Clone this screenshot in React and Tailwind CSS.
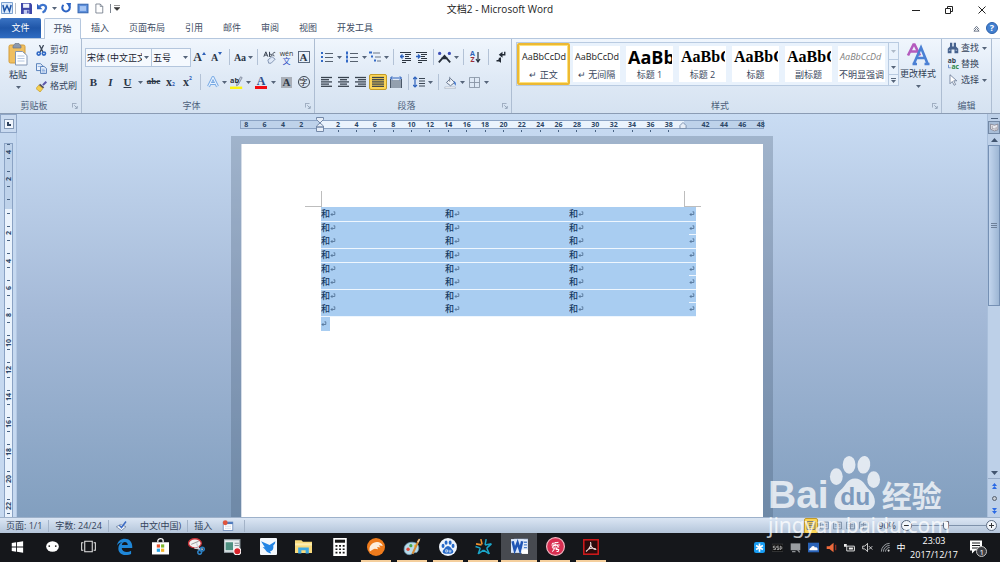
import React from "react";

const UI = "font-['Open_Sans','Noto_Sans_CJK_SC',sans-serif]";

function Svg({ className, box = "0 0 16 16", children }) {
  return (
    <svg viewBox={box} className={"shrink-0 " + className} fill="none" aria-hidden="true">
      {children}
    </svg>
  );
}

function Caret({ className = "w-[9px]" }) {
  return (
    <span className={"flex shrink-0 justify-center " + className}>
      <Svg box="0 0 5 3" className="h-[3px] w-[5px]">
        <path d="M0 0h5L2.500 3z" fill="#56657a" />
      </Svg>
    </span>
  );
}

function Sep({ className = "w-[8px]" }) {
  return (
    <span className={"flex shrink-0 justify-center " + className}>
      <span className="h-[16px] w-px bg-[#b3c2d6]" />
    </span>
  );
}

function Slot({ label, className = "w-[17px]", active, children }) {
  return (
    <button
      type="button"
      aria-label={label}
      className={
        "flex h-[16px] shrink-0 items-center justify-center " +
        (active ? "rounded-[2px] border border-[#c29b29] bg-[#fbd558] " : "") +
        className
      }
    >
      {children}
    </button>
  );
}

function Launcher() {
  return (
    <Svg box="0 0 8 8" className="h-[6px] w-[6px]">
      <path d="M.5 6V.5H6M3 3l3.500 3.500M7 4v3.200H3.800" stroke="#8393a8" />
    </Svg>
  );
}

function Group({ title, className, launcher = true, children }) {
  return (
    <section aria-label={title} className={"flex shrink-0 flex-col border-r border-[#adbdd2] " + className}>
      <div className="flex-1">{children}</div>
      <div className="flex h-[15px] items-center">
        <span className={"flex-1 text-center text-[9px] text-[#4c5f7a] " + (launcher ? "pr-[4px]" : "")}>{title}</span>
        {launcher ? (
          <span className="pr-[3px]">
            <Launcher />
          </span>
        ) : null}
      </div>
    </section>
  );
}

function Lines({ rows }) {
  return (
    <Svg box="0 0 12 12" className="h-[12px] w-[12px]">
      {rows.map(([x, w], i) => (
        <path key={i} d={`M${x} ${1.5 + i * 2.2}h${w}`} stroke="#39434f" strokeWidth="1.300" />
      ))}
    </Svg>
  );
}

function TitleBar() {
  return (
    <header className="grid h-[18px] shrink-0 grid-cols-[1fr_auto_1fr] bg-white">
      <div className="flex items-center pb-[2px]">
        <Svg className="ml-px h-[12px] w-[12px]">
          <rect x=".5" y=".5" width="15" height="15" rx="1" fill="#dceafa" stroke="#3f74b8" />
          <path d="M2.500 4l2 8L8 5l3.300 7 2.200-8" stroke="#1f55a8" strokeWidth="2" />
        </Svg>
        <span className="ml-[2px] h-[11px] w-px bg-[#b9bec5]" />
        <Slot label="保存" className="ml-[2px] w-[17px]">
          <Svg className="h-[11px] w-[11px]">
            <path d="M0 0h14l2 2v14H0z" fill="#3d46a8" />
            <path d="M3 1h9v6H3z" fill="#eef2fc" />
            <path d="M4 10h8v6H4z" fill="#c5cdf0" />
            <path d="M9 11h2v4H9z" fill="#3d46a8" />
          </Svg>
        </Slot>
        <Slot label="撤消" className="w-[14px]">
          <Svg className="h-[11px] w-[11px]">
            <path d="M0 1v8h8z" fill="#2e62bd" />
            <path d="M3 6c4-6 11-3 10 2-.5 3-3 5-5 6" stroke="#3d74cd" strokeWidth="3.200" />
          </Svg>
        </Slot>
        <Caret className="w-[10px]" />
        <Slot label="恢复" className="w-[14px]">
          <Svg className="h-[10px] w-[10px]">
            <path d="M4 3a6 6 0 1 0 8 0" stroke="#2d64c4" strokeWidth="3.200" />
            <path d="M8 0h8l-1 8z" fill="#2d64c4" />
          </Svg>
        </Slot>
        <Slot label="全屏" className="ml-[2px] w-[16px]">
          <Svg className="h-[11px] w-[12px]">
            <rect x=".8" y="1.800" width="14.400" height="12.400" fill="#5f90dc" stroke="#3465b0" strokeWidth="1.500" />
            <path d="M3.500 4.500h9v7h-9z" fill="#a6c5f4" />
          </Svg>
        </Slot>
        <Slot label="新建" className="w-[16px]">
          <Svg className="h-[11px] w-[10px]">
            <path d="M3 .8h7l4 4v10.400H3z" fill="#fff" stroke="#616c7c" strokeWidth="1.200" />
            <path d="M10 .8v4h4" stroke="#616c7c" />
          </Svg>
        </Slot>
        <span className="ml-[3px] h-[9px] w-px bg-[#7d8590]" />
        <Svg box="0 0 6 6" className="ml-[3px] h-[6px] w-[6px]">
          <path d="M0 .5h6M0 2.500h6L3 5.500z" fill="#333" stroke="#333" strokeWidth=".5" />
        </Svg>
      </div>
      <h1 className="self-center text-[10px] leading-[18px] text-[#1c1c1c]">文档2 - Microsoft Word</h1>
      <div className="flex items-center justify-end pr-[2px] pt-[2px]">
        <Slot label="最小化" className="w-[33px]">
          <span className="h-px w-[8px] bg-[#222]" />
        </Slot>
        <Slot label="向下还原" className="w-[33px]">
          <Svg box="0 0 8 8" className="h-[8px] w-[8px]">
            <path d="M.5 2.500h5v5h-5zM2.500 2.500v-2h5v5h-2" stroke="#222" />
          </Svg>
        </Slot>
        <Slot label="关闭" className="w-[33px]">
          <Svg box="0 0 8 8" className="h-[8px] w-[8px]">
            <path d="M.5.5l7 7M7.500.5l-7 7" stroke="#222" />
          </Svg>
        </Slot>
      </div>
    </header>
  );
}

const TABS = ["插入", "页面布局", "引用", "邮件", "审阅", "视图", "开发工具"];

function TabBar() {
  return (
    <nav className="flex h-[20px] shrink-0 items-stretch bg-white text-[9px] text-[#3c4b63]">
      <button type="button" className="w-[41px] rounded-t-[2px] bg-gradient-to-b from-[#3b74c4] via-[#1f56a8] to-[#2f6cc2] text-white">
        文件
      </button>
      <button type="button" className="relative z-10 -mb-px ml-[3px] w-[37px] rounded-t-[2px] border border-b-0 border-[#b5c7de] bg-[#f4f9fe]">
        开始
      </button>
      {TABS.map((t) => (
        <button type="button" key={t} className="px-[10px]">
          {t}
        </button>
      ))}
      <div className="ml-auto flex items-center gap-[6px] pr-[2px]">
        <button type="button" aria-label="功能区最小化">
          <Svg box="0 0 8 8" className="h-[7px] w-[7px]">
            <path d="M1 5l3-3.500L7 5M1 7l3-3 3 3z" stroke="#59667a" />
          </Svg>
        </button>
        <button type="button" aria-label="帮助" className="flex h-[12px] w-[12px] items-center justify-center rounded-full border border-[#2d61ab] bg-[#4380d0] text-[9px] font-bold leading-[10px] text-white">
          ?
        </button>
      </div>
    </nav>
  );
}

function ClipboardGroup() {
  return (
    <Group title="剪贴板" className="w-[82px]">
      <div className="flex pt-[2px]">
        <button type="button" className="flex w-[36px] flex-col items-center text-[9px] leading-[14px] text-[#2f3e55]">
          <Svg box="0 0 20 24" className="mt-px h-[24px] w-[20px]">
            <rect x="1" y="3" width="16" height="18" rx="1.500" fill="#f0bf60" stroke="#d39c3b" />
            <path d="M5 4c0-1 2-1 2-2.500h4C11 3 13 3 13 4v2H5z" fill="#8b99ae" stroke="#6b7789" strokeWidth=".7" />
            <path d="M7.500 9.500h7l4.500 4v9.500H7.500z" fill="#fdfeff" stroke="#8396b3" />
            <path d="M9.500 14h7M9.500 16.500h7M9.500 19h7" stroke="#b4c6e0" />
          </Svg>
          <span className="mt-[2px]">粘贴</span>
          <span className="flex h-[10px] items-center">
            <Caret />
          </span>
        </button>
        <div className="flex flex-col text-[9px] text-[#34435a]">
          <button type="button" className="flex h-[18px] items-center gap-[3px]">
            <Svg className="h-[11px] w-[11px]">
              <path d="M5 0l5 10M11 0L6 10" stroke="#3a4556" strokeWidth="1.800" />
              <circle cx="4" cy="12.500" r="2.300" stroke="#2f68c4" strokeWidth="2.400" />
              <circle cx="11.500" cy="12.500" r="2.300" stroke="#2f68c4" strokeWidth="2.400" />
            </Svg>
            剪切
          </button>
          <button type="button" className="flex h-[18px] items-center gap-[3px]">
            <Svg className="h-[11px] w-[11px]">
              <path d="M.7 1h6l3 3v7h-9z" fill="#e8f1fd" stroke="#3e6cae" strokeWidth="1.200" />
              <path d="M6.700 5h5l3.500 3v7.200H6.700z" fill="#e8f1fd" stroke="#3e6cae" strokeWidth="1.200" />
              <path d="M8.500 9h4M8.500 11h5M8.500 13h5M2.500 5h4" stroke="#6b95d4" />
            </Svg>
            复制
          </button>
          <button type="button" className="flex h-[18px] items-center gap-[3px]">
            <Svg className="h-[11px] w-[11px]">
              <path d="M15 1l-5 5" stroke="#5b56a8" strokeWidth="3" />
              <path d="M6 4l6 5-2 2-6-5z" fill="#55515f" />
              <path d="M4 6l6 5-4 5-6-5z" fill="#f4cf4d" stroke="#c69a2a" />
            </Svg>
            格式刷
          </button>
        </div>
      </div>
    </Group>
  );
}

function Combo({ label, value, className }) {
  return (
    <div className={"flex h-[19px] items-center border border-[#b4c6dd] bg-[#f5f9fe] " + className}>
      <input
        aria-label={label}
        defaultValue={value}
        className="h-full min-w-0 flex-1 bg-transparent pl-px text-[9px] text-[#1b2533] outline-none"
      />
      <Caret />
    </div>
  );
}

function FontGroup() {
  const serif = "font-['Liberation_Serif',serif] text-[#2b3646]";
  return (
    <Group title="字体" className="w-[233px]">
      <div className="flex flex-col gap-[5px] pl-[3px] pt-[8px]">
        <div className="flex h-[20px] items-center">
          <Combo label="字体" value="宋体 (中文正文)" className="w-[67px]" />
          <Combo label="字号" value="五号" className="w-[39px] border-l-0" />
          <Slot label="增大字体">
            <span className={serif + " text-[12px] font-bold"}>A</span>
            <Svg box="0 0 4 3" className="mb-[8px] h-[3px] w-[4px]">
              <path d="M0 3h4L2 0z" fill="#2d60b8" />
            </Svg>
          </Slot>
          <Slot label="缩小字体">
            <span className={serif + " pt-px text-[10px] font-bold"}>A</span>
            <Svg box="0 0 4 3" className="mb-[8px] h-[3px] w-[4px]">
              <path d="M0 0h4L2 3z" fill="#2d60b8" />
            </Svg>
          </Slot>
          <Sep />
          <Slot label="更改大小写" className="w-[14px]">
            <span className={serif + " text-[10px] font-bold"}>Aa</span>
          </Slot>
          <Caret className="w-[6px]" />
          <Sep />
          <Slot label="清除格式">
            <Svg className="h-[13px] w-[13px]">
              <path d="M1 7l2.500-6L6 7M2 5h3M8 1v6M8 4.500c4-2 4 3 0 2M15 2c-3-1.500-4 4-1 4" stroke="#36414f" strokeWidth="1.200" />
              <path d="M6 11l5-4 4 3-5 5H7z" fill="#dfe9f8" stroke="#7286a6" />
            </Svg>
          </Slot>
          <Slot label="拼音指南">
            <span className="flex flex-col items-center text-[8px] leading-[8px] text-[#2e50c4]">
              <span className="text-[7px] leading-[7px] text-[#333]">wén</span>文
            </span>
          </Slot>
          <Slot label="字符边框">
            <span className={serif + " flex h-[12px] w-[12px] items-center justify-center border border-[#5a6a7f] text-[11px] font-bold"}>A</span>
          </Slot>
        </div>
        <div className="flex h-[20px] items-center">
          <Slot label="加粗">
            <span className={serif + " text-[11px] font-bold"}>B</span>
          </Slot>
          <Slot label="倾斜">
            <span className={serif + " text-[11px] font-bold italic"}>I</span>
          </Slot>
          <Slot label="下划线">
            <span className={serif + " text-[11px] font-bold underline"}>U</span>
          </Slot>
          <Caret />
          <Slot label="删除线">
            <span className={serif + " text-[9px] font-bold line-through"}>abe</span>
          </Slot>
          <Slot label="下标">
            <span className={serif + " text-[12px] font-bold"}>x</span>
            <span className="mt-[6px] text-[5px] font-bold text-[#2d60b8]">2</span>
          </Slot>
          <Slot label="上标">
            <span className={serif + " text-[12px] font-bold"}>x</span>
            <span className="mb-[6px] text-[5px] font-bold text-[#2d60b8]">2</span>
          </Slot>
          <Sep className="w-[9px]" />
          <Slot label="文本效果" className="w-[15px]">
            <Svg className="h-[12px] w-[12px]">
              <path d="M2 14L8 2l6 12M5 10h6" stroke="#78aae4" strokeWidth="4" />
              <path d="M2 14L8 2l6 12M5 10h6" stroke="#e9f3ff" strokeWidth="1.500" />
            </Svg>
          </Slot>
          <Caret className="w-[8px]" />
          <Slot label="突出显示" className="w-[16px]">
            <Svg className="h-[13px] w-[13px]">
              <path d="M0 13h15v3H0z" fill="#fcf410" />
              <path d="M15 2l-5 9-2 1 .5-3L13 1z" fill="#c8cfdb" stroke="#67738a" strokeWidth=".8" />
              <text x="0" y="9" fontSize="9" fontWeight="700" fill="#2d3541">ab</text>
            </Svg>
          </Slot>
          <Caret />
          <Slot label="字体颜色" className="w-[16px]">
            <span className="flex flex-col items-center">
              <span className="font-['Liberation_Serif',serif] text-[12px] font-bold leading-[10px] text-[#2f4f8c]">A</span>
              <span className="h-[3px] w-[12px] bg-[#f20d12]" />
            </span>
          </Slot>
          <Caret />
          <Slot label="字符底纹">
            <span className={serif + " flex h-[11px] w-[11px] items-center justify-center bg-[#a9afb8] text-[11px] font-bold"}>A</span>
          </Slot>
          <Slot label="带圈字符">
            <span className="flex h-[12px] w-[12px] items-center justify-center rounded-full border border-[#3a4552] text-[8px] leading-[10px] text-[#222]">字</span>
          </Slot>
        </div>
      </div>
    </Group>
  );
}

function ListIcon({ kind }) {
  return (
    <Svg box="0 0 12 12" className="h-[12px] w-[12px]">
      {kind === "multi" ? (
        <>
          <path d="M0 1.500h3M2 5.500h2M5 9.500h2" stroke="#3269c6" strokeWidth="1.800" />
          <path d="M4 2h7M6 6h6M8 10h4" stroke="#6b7787" />
        </>
      ) : (
        <>
          <path d="M0 2h2M0 6h2M0 10h2" stroke="#3269c6" strokeWidth={kind === "bullet" ? 2 : 3} />
          <path d="M4 2.500h8M4 6.500h8M4 10.500h8" stroke="#56616f" />
        </>
      )}
    </Svg>
  );
}

function IndentIcon({ out }) {
  return (
    <Svg box="0 0 12 12" className="h-[12px] w-[12px]">
      <path d="M0 1.500h11M5 3.500h6M5 5.500h4M5 7.500h6M2 9.500h9M2 11.500h4" stroke="#2d3641" />
      <path d={out ? "M0 5.500h4M2.500 3.500l-2 2 2 2" : "M0 5.500h4M2 3.500l2 2-2 2"} stroke="#2d62bd" strokeWidth="1.300" />
    </Svg>
  );
}

function ParagraphGroup() {
  return (
    <Group title="段落" className="w-[197px]">
      <div className="flex flex-col gap-[5px] pl-[3px] pt-[8px]">
        <div className="flex h-[20px] items-center">
          <Slot label="项目符号"><ListIcon kind="bullet" /></Slot>
          <Caret className="w-[8px]" />
          <Slot label="编号"><ListIcon kind="number" /></Slot>
          <Caret className="w-[8px]" />
          <Slot label="多级列表" className="w-[14px]"><ListIcon kind="multi" /></Slot>
          <Caret className="w-[8px]" />
          <Sep className="w-[7px]" />
          <Slot label="减少缩进量"><IndentIcon out /></Slot>
          <Slot label="增加缩进量" className="w-[15px]"><IndentIcon /></Slot>
          <Sep className="w-[8px]" />
          <Slot label="中文版式" className="w-[15px]">
            <Svg className="h-[13px] w-[13px]">
              <path d="M1 14l7-8 7 8M4 9h8" stroke="#262e39" strokeWidth="2.200" />
              <circle cx="2" cy="3" r="2" fill="#3e4fb8" />
              <circle cx="14" cy="3" r="2" fill="#3e4fb8" />
            </Svg>
          </Slot>
          <Caret className="w-[8px]" />
          <Sep className="w-[7px]" />
          <Slot label="排序">
            <span className="flex flex-col text-[7px] font-bold leading-[6px] text-[#2f62b8]">
              A<span className="text-[#9c2f3c]">Z</span>
            </span>
            <Svg box="0 0 6 12" className="h-[12px] w-[6px]">
              <path d="M3 1v9M1 8l2 3 2-3" stroke="#2b3440" strokeWidth="1.200" />
            </Svg>
          </Slot>
          <Sep className="w-[8px]" />
          <Slot label="显示编辑标记">
            <Svg className="h-[12px] w-[12px]">
              <path d="M13 1v4H8M6 9v4H2" stroke="#222a35" strokeWidth="1.800" />
              <path d="M10 1v8L5 5zM8 8v8l-4-4z" fill="#222a35" />
            </Svg>
          </Slot>
        </div>
        <div className="flex h-[20px] items-center">
          <Slot label="左对齐"><Lines rows={[[0, 11], [0, 8], [0, 11], [0, 8], [0, 11]]} /></Slot>
          <Slot label="居中"><Lines rows={[[0, 11], [2, 7], [0, 11], [2, 7], [0, 11]]} /></Slot>
          <Slot label="右对齐"><Lines rows={[[0, 11], [3, 8], [0, 11], [3, 8], [0, 11]]} /></Slot>
          <Slot label="两端对齐" active className="w-[18px]"><Lines rows={[[0, 12], [0, 12], [0, 12], [0, 12], [0, 12]]} /></Slot>
          <Slot label="分散对齐">
            <Svg box="0 0 12 12" className="h-[12px] w-[12px]">
              <path d="M0 5h12M0 7h12M0 9h12M0 11h12M.5 3v9M11.500 3v9" stroke="#4b5868" />
              <path d="M.5 2h11M2.500.2L.5 2l2 1.800M9.500.2l2 1.800-2 1.800" stroke="#2d62bd" />
            </Svg>
          </Slot>
          <Sep className="w-[8px]" />
          <Slot label="行距" className="w-[14px]">
            <Svg box="0 0 12 12" className="h-[12px] w-[12px]">
              <path d="M2 1v10M0 3l2-2 2 2M0 9l2 2 2-2" stroke="#2d62bd" strokeWidth="1.200" />
              <path d="M6 2.500h6M6 5h6M6 7.500h6M6 10h6" stroke="#3b4755" />
            </Svg>
          </Slot>
          <Caret className="w-[8px]" />
          <Sep className="w-[8px]" />
          <Slot label="底纹">
            <Svg className="h-[13px] w-[13px]">
              <path d="M3 8l5-5 5 5-5 4z" fill="#f0f4fa" stroke="#65748b" strokeWidth="1.200" />
              <path d="M7 1v6" stroke="#65748b" />
              <path d="M12 6c3 1 3 4 2 6l-2-4z" fill="#3a6fc8" />
              <path d="M1 13.500h13v2H1z" fill="#fff" stroke="#9aa7b8" strokeWidth=".7" />
            </Svg>
          </Slot>
          <Caret className="w-[7px]" />
          <Slot label="框线">
            <Svg box="0 0 12 12" className="h-[11px] w-[11px]">
              <path d="M.5.5h11v11H.5zM6 .5v11M.5 6h11" stroke="#8995a5" />
            </Svg>
          </Slot>
          <Caret className="w-[7px]" />
        </div>
      </div>
    </Group>
  );
}

const CAMBRIA = "font-['Liberation_Serif',serif] text-[16px] font-bold text-black";
const STYLES = [
  { name: "↵ 正文", text: "AaBbCcDd", cls: "text-[9px] text-[#222]", on: true },
  { name: "↵ 无间隔", text: "AaBbCcDd", cls: "text-[9px] text-[#222]" },
  { name: "标题 1", text: "AaBb", cls: "text-[18px] font-bold text-black" },
  { name: "标题 2", text: "AaBbC", cls: CAMBRIA },
  { name: "标题", text: "AaBbC", cls: CAMBRIA },
  { name: "副标题", text: "AaBbC", cls: CAMBRIA },
  { name: "不明显强调", text: "AaBbCcDd", cls: "text-[9px] italic text-[#808080]" },
];

function StylesGroup() {
  return (
    <Group title="样式" className="w-[430px]">
      <div className="flex pl-[4px] pt-[3px]">
        <div className="flex h-[44px] border border-[#b9cbe1] bg-[#e9f2fc]">
          {STYLES.map((s) => (
            <button
              type="button"
              key={s.name}
              className={
                "flex w-[53px] rounded-[2px] " +
                (s.on ? "border-2 border-[#edb933] bg-[#fde27c] p-px" : "p-[3px]")
              }
            >
              <span className="flex h-full min-w-0 flex-1 flex-col overflow-hidden bg-white px-px">
                <span className={"flex h-[23px] items-center overflow-hidden whitespace-nowrap pl-px " + s.cls}>{s.text}</span>
                <span className="whitespace-nowrap text-center text-[9px] leading-[14px] text-[#38465c]">{s.name}</span>
              </span>
            </button>
          ))}
          <div className="flex w-[10px] flex-col border-l border-[#b9cbe1]">
            <Slot label="上一行" className="w-full opacity-40"><Caret /></Slot>
            <Slot label="下一行" className="w-full border-y border-[#b9cbe1]"><Caret /></Slot>
            <button type="button" aria-label="其他样式" className="flex flex-1 flex-col items-center justify-center gap-px">
              <span className="h-px w-[5px] bg-[#56657a]" />
              <Caret />
            </button>
          </div>
        </div>
        <button type="button" className="flex w-[38px] flex-col items-center whitespace-nowrap text-[9px] leading-[14px] text-[#2f3e55]">
          <Svg box="0 0 24 24" className="h-[25px] w-[24px]">
            <path d="M2 13L7.500 2h1L14 13M4.500 9h8" stroke="#b45bbd" strokeWidth="2.600" />
            <path d="M8 21L15 5l6.500 16M11 15.500h9M6.500 21.500h4.500M18.500 21.500h5" stroke="#4b80d4" strokeWidth="2.600" />
          </Svg>
          <span>更改样式</span>
          <span className="flex h-[10px] items-center"><Caret /></span>
        </button>
      </div>
    </Group>
  );
}

function EditGroup() {
  return (
    <Group title="编辑" className="w-[50px]" launcher={false}>
      <div className="flex flex-col pl-[5px] pt-px text-[9px] text-[#34435a]">
        <button type="button" className="flex h-[16px] items-center">
          <Svg className="mr-[2px] h-[12px] w-[12px]">
            <path d="M4 1h3v5h2V1h3v5l3 3v6h-5v-5H6v5H1V9l3-3z" fill="#46628e" />
            <path d="M2.500 11h2M11.500 11h2" stroke="#d5e2f4" />
          </Svg>
          查找
          <Caret className="w-[11px]" />
        </button>
        <button type="button" className="flex h-[16px] items-center">
          <Svg className="mr-[2px] h-[12px] w-[12px]">
            <text x="1" y="7" fontSize="9" fontWeight="700" fill="#323d4d">ab</text>
            <text x="6" y="15" fontSize="9" fontWeight="700" fill="#2b8a48">ac</text>
            <path d="M2 9v4h3" stroke="#4c78c0" />
          </Svg>
          替换
        </button>
        <button type="button" className="flex h-[16px] items-center">
          <Svg className="mr-[2px] h-[12px] w-[12px]">
            <path d="M4 1v12l3-3 2.500 5 2-1L9 9h4z" fill="#fff" stroke="#5d6f8c" />
          </Svg>
          选择
          <Caret className="w-[11px]" />
        </button>
      </div>
    </Group>
  );
}

function Ribbon() {
  return (
    <div className="flex h-[76px] shrink-0 border-y border-t-[#b5c7de] border-b-[#8b9cb4] bg-gradient-to-b from-[#f0f6fd] via-[#e0eaf6] to-[#d5e2f1]">
      <ClipboardGroup />
      <FontGroup />
      <ParagraphGroup />
      <StylesGroup />
      <EditGroup />
    </div>
  );
}

const H_MARKS = Array.from({ length: 29 }, (_, i) => (i - 4) * 2);

function HorizontalRuler() {
  return (
    <div className="relative mt-[6px] h-[12px] w-[524px] self-center text-[7px] font-bold leading-[7px] text-[#2c4666]">
      <div className="h-[9px] border border-[#8ba3c4] bg-[linear-gradient(to_right,#bed2ea_79px,#eaf3fd_79px,#eaf3fd_443px,#bed2ea_443px)]" />
      <ol className="absolute left-[-3px] right-[-6px] top-px flex">
        {H_MARKS.map((n) => (
          <li key={n} className="flex flex-1 flex-col items-center">
            {n === 0 || n === 40 ? "" : Math.abs(n)}
            {n > 0 && n < 40 ? <span className="mt-[2px] h-[2px] w-px bg-[#4a6484]" /> : null}
          </li>
        ))}
      </ol>
      <Svg box="0 0 8 15" className="absolute left-[76px] top-[-3px] h-[15px] w-[8px]">
        <path d="M.5.5h7v2L4 6 .5 2.500zM4 6l3.500 3v1h-7V9zM.5 10h7v4.500h-7z" fill="#e6edf7" stroke="#7489a8" />
      </Svg>
      <Svg box="0 0 8 8" className="absolute left-[439px] top-[2px] h-[7px] w-[8px]">
        <path d="M4 .5L7.500 4v3.500h-7V4z" fill="#e6edf7" stroke="#7489a8" />
      </Svg>
    </div>
  );
}

const V_MARKS = ["4", "2", "", "2", "4", "6", "8", "10", "12", "14", "16", "18", "20", "22"];

function VerticalRuler() {
  return (
    <div className="flex w-[17px] shrink-0 flex-col border-r border-[#b4c9e4] bg-[#c6d9f0]">
      <button type="button" aria-label="制表符" className="flex h-[19px] w-[17px] shrink-0 items-center justify-center border border-[#8fa6c6] bg-[#c9daf0]">
        <span className="flex h-[10px] w-[10px] items-center justify-center border border-[#8499b5] bg-[#f0f5fc]">
          <span className="h-[4px] w-[4px] border-b-2 border-l-2 border-[#2f435f]" />
        </span>
      </button>
      <div className="ml-[4px] mt-[10px] flex min-h-0 w-[9px] flex-1 flex-col overflow-hidden border border-b-0 border-[#8ba3c4] bg-[linear-gradient(to_bottom,#bed2ea_65px,#eaf3fd_65px)]">
        <ol className="-mt-[6px] flex h-[382px] shrink-0 flex-col text-[7px] font-bold leading-[7px] text-[#2c4666]">
          {V_MARKS.map((n, i) => (
            <li key={i} className="flex flex-1 flex-col items-center justify-between py-[6px]">
              <span className="h-px w-[3px] bg-[#4a6484]" />
              <span className="rotate-180 [writing-mode:vertical-rl]">{n}</span>
              <span className="h-px w-[3px] bg-[#4a6484]" />
            </li>
          ))}
        </ol>
      </div>
    </div>
  );
}

function Mark() {
  return (
    <Svg box="0 0 6 6" className="inline-block h-[6px] w-[6px]">
      <path d="M3.500.8h1.300v2.700H1M2.500 2L1 3.500 2.500 5" stroke="#4d6c90" strokeWidth=".8" />
    </Svg>
  );
}

const ROWS = [
  { h: "h-[14px]", line: true },
  { h: "h-[13px]", line: false },
  { h: "h-[14px]", line: true },
  { h: "h-[14px]", line: true },
  { h: "h-[13px]", line: false },
  { h: "h-[14px]", line: true },
  { h: "h-[13px]", line: false },
  { h: "h-[14px]", line: true },
];

function DocumentPage() {
  return (
    <div className="mt-[4px] flex min-h-0 w-[542px] flex-1 flex-col self-center bg-[#33475f]/25 px-[10px] pt-[8px]">
      <main className="relative min-h-0 flex-1 overflow-hidden border-l border-[#d5dde8] bg-white pl-[79px] pt-[63px]">
        <span className="absolute left-[63px] top-[47px] h-[16px] w-[17px] border-b border-r border-[#bdbdbd]" />
        <span className="absolute left-[442px] top-[47px] h-[16px] w-[17px] border-b border-l border-[#bdbdbd]" />
        <table className="w-[375px] table-fixed border-collapse text-[9px] font-medium leading-[12px] text-[#173a63]">
          <colgroup>
            <col className="w-[124px]" />
            <col className="w-[124px]" />
            <col className="w-[120px]" />
            <col className="w-[7px]" />
          </colgroup>
          <tbody>
            {ROWS.map((r, i) => (
              <tr key={i} className={"bg-[#a9cdf1] " + r.h}>
                {[0, 1, 2].map((c) => (
                  <td
                    key={c}
                    className={
                      "overflow-hidden whitespace-nowrap p-0 font-['Noto_Sans_CJK_SC',sans-serif] " +
                      (r.line ? "border-b border-[#eef6fe]" : "")
                    }
                  >
                    <span className="flex items-center">和<Mark /></span>
                  </td>
                ))}
                <td className="border-b border-[#eef6fe] p-0">
                  <span className="flex items-center"><Mark /></span>
                </td>
              </tr>
            ))}
          </tbody>
        </table>
        <p className="flex h-[14px] w-[9px] items-center bg-[#a9cdf1]"><Mark /></p>
      </main>
    </div>
  );
}

function ScrollBar() {
  return (
    <div className="flex w-[13px] shrink-0 flex-col items-center border-l border-[#a9bfdb] bg-[#bdd0e8]">
      <span className="mt-[4px] h-px w-[7px] bg-[#4d617e]" />
      <button type="button" aria-label="标尺" className="mt-[2px] flex h-[13px] w-full shrink-0 items-center justify-center border border-[#7288a5] bg-[#a8bdd7]">
        <Svg className="h-[9px] w-[9px]">
          <path d="M1 2l7 2 6-2v10l-6 2-7-3z" fill="#e9eaf0" stroke="#77727c" strokeWidth="1.200" />
          <path d="M4 5v5l7 1V7" stroke="#77727c" />
        </Svg>
      </button>
      <button type="button" aria-label="向上滚动" className="flex h-[11px] w-full items-center justify-center">
        <Svg box="0 0 7 4" className="h-[4px] w-[7px]"><path d="M0 4h7L3.500 0z" fill="#41546f" /></Svg>
      </button>
      <div className="flex min-h-0 w-full flex-1 flex-col">
        <div className="flex h-1/2 flex-col items-center justify-center gap-px border border-[#7590b4] bg-gradient-to-r from-[#c2d5ed] to-[#9db6d4]">
          <span className="h-px w-[6px] bg-[#6d8099]" />
          <span className="h-px w-[6px] bg-[#6d8099]" />
          <span className="h-px w-[6px] bg-[#6d8099]" />
        </div>
      </div>
      <button type="button" aria-label="向下滚动" className="flex h-[12px] w-full shrink-0 items-center justify-center border-b border-[#96abc8]">
        <Svg box="0 0 7 4" className="h-[4px] w-[7px]"><path d="M0 0h7L3.500 4z" fill="#41546f" /></Svg>
      </button>
      <button type="button" aria-label="上一页" className="flex h-[13px] items-center">
        <Svg box="0 0 5 6" className="h-[6px] w-[5px]"><path d="M0 3h5L2.500 0zM0 6h5L2.500 3z" fill="#2b6ae6" /></Svg>
      </button>
      <button type="button" aria-label="选择浏览对象" className="flex h-[12px] items-center">
        <span className="h-[5px] w-[5px] rounded-full border border-[#56606e] bg-[#c6ccd4]" />
      </button>
      <button type="button" aria-label="下一页" className="flex h-[13px] items-center">
        <Svg box="0 0 5 6" className="h-[6px] w-[5px]"><path d="M0 0h5L2.500 3zM0 3h5L2.500 6z" fill="#2b6ae6" /></Svg>
      </button>
    </div>
  );
}

function StatusBar() {
  const sep = "h-[12px] w-px bg-[#a3b3c8]";
  return (
    <footer className="flex h-[16px] shrink-0 items-center border-t border-[#9db1ca] bg-gradient-to-b from-[#dbe6f4] to-[#b4c5da] text-[9px] text-[#34435a]">
      <div className="flex items-center gap-[6px] whitespace-nowrap pl-[6px]">
        <span>页面: 1/1</span>
        <span className={sep} />
        <span>字数: 24/24</span>
        <span className={sep} />
        <Svg className="h-[12px] w-[13px]">
          <path d="M1 9l6-3 7 3-6 5z" fill="#f4f7fc" stroke="#6a7c98" />
          <path d="M5 7l3 3 6-8" stroke="#3c6bc4" strokeWidth="2" />
        </Svg>
        <span className="ml-[6px]">中文(中国)</span>
        <span className={sep} />
        <span>插入</span>
        <Svg className="mx-[4px] h-[11px] w-[12px]">
          <rect x="1" y="3" width="14" height="12" fill="#fff" stroke="#577ab0" />
          <path d="M1 3h14v3H1z" fill="#4b78bd" />
          <path d="M4 9h9M4 12h9" stroke="#a6b7d2" strokeDasharray="2 1" />
          <circle cx="4" cy="4" r="3.500" fill="#e0543c" />
        </Svg>
        <span className={sep} />
      </div>
      <div className="ml-auto flex items-center pr-[3px]">
        <Slot label="页面视图" active className="w-[14px]">
          <Svg className="h-[9px] w-[10px]"><path d="M1 1h14v14H1zM4 5h8M4 8h8M4 11h8" stroke="#5b6676" strokeWidth="1.500" /></Svg>
        </Slot>
        {["阅读版式", "Web 版式", "大纲", "草稿"].map((l) => (
          <Slot key={l} label={l} className="w-[13px]">
            <Svg className="h-[9px] w-[9px]"><path d="M1 2h14v12H1zM8 2v12M3 6h4M9 6h4M3 9h4M9 9h4" stroke="#667891" strokeWidth="1.300" /></Svg>
          </Slot>
        ))}
        <span className="ml-[8px]">90%</span>
        <button type="button" aria-label="缩小" className="ml-[5px] flex h-[11px] w-[11px] items-center justify-center rounded-full border border-[#5d6c82] bg-[#f2f6fb]">
          <span className="h-px w-[5px] bg-[#333]" />
        </button>
        <input
          type="range"
          aria-label="显示比例"
          defaultValue="45"
          className="h-[10px] w-[74px] appearance-none bg-[linear-gradient(#7f92ab,#7f92ab)] bg-[length:100%_1px] bg-center bg-no-repeat [&::-webkit-slider-thumb]:h-[9px] [&::-webkit-slider-thumb]:w-[6px] [&::-webkit-slider-thumb]:appearance-none [&::-webkit-slider-thumb]:rounded-b-[3px] [&::-webkit-slider-thumb]:border [&::-webkit-slider-thumb]:border-[#5d6c82] [&::-webkit-slider-thumb]:bg-[#f2f6fb]"
        />
        <button type="button" aria-label="放大" className="flex h-[11px] w-[11px] items-center justify-center rounded-full border border-[#5d6c82] bg-[#f2f6fb]">
          <Svg box="0 0 5 5" className="h-[5px] w-[5px]"><path d="M2.500 0v5M0 2.500h5" stroke="#333" /></Svg>
        </button>
      </div>
    </footer>
  );
}

const APPS = [
  { name: "开始", icon: <path d="M2 3.500l5-.8v4.800H2zM8 2.500l7-1v6H8zM2 8.500h5v4.800l-5-.8zM8 8.500h7v6l-7-1z" fill="#fff" />, size: "h-[14px] w-[14px]" },
  {
    name: "小娜",
    icon: (
      <>
        <ellipse cx="8" cy="8" rx="7.800" ry="6.400" fill="#fff" />
        <circle cx="4" cy="7.500" r="1.100" fill="#1a1a1a" />
        <circle cx="12" cy="7.500" r="1.100" fill="#1a1a1a" />
      </>
    ),
    size: "h-[13px] w-[13px]",
  },
  { name: "任务视图", icon: <path d="M4 2.500h8v11H4zM2.500 4H.7v8h1.800M13.500 4h1.800v8h-1.800" stroke="#e8e8e8" strokeWidth="1.100" />, size: "h-[15px] w-[15px]" },
  {
    name: "Edge",
    icon: <path d="M.8 7.300C1.500 3 4.500.6 8.400.6c4.300 0 6.900 3.200 6.900 7.400v1.500H5.400c.2 4 5.500 4.600 8.800 2.600v3c-5.600 2.300-12 .3-12-5.300 0-3 1.500-4.900 4-6C3.800 4.200 1.800 5.300.8 7.300zm4.700-.8h5.600c-.1-3.700-5.200-3.800-5.600 0z" fill="#1f87d8" />,
    size: "h-[17px] w-[17px]",
  },
  {
    name: "应用商店",
    icon: (
      <>
        <path d="M0 4h16v11.500H0z" fill="#fff" />
        <path d="M5.500 4V2.500C5.500 0 10.500 0 10.500 2.500V4" stroke="#fff" strokeWidth="1.200" />
        <path d="M4.500 6h3v3h-3z" fill="#e8532c" />
        <path d="M8.500 6h3v3h-3z" fill="#7db82c" />
        <path d="M4.500 10h3v3h-3z" fill="#22a4ea" />
        <path d="M8.500 10h3v3h-3z" fill="#f6b526" />
      </>
    ),
    size: "h-[17px] w-[17px]",
  },
  {
    name: "截图工具",
    icon: (
      <>
        <ellipse cx="6.500" cy="5" rx="6" ry="4.300" fill="#f3f3f3" stroke="#c9343a" strokeWidth="1.300" />
        <path d="M3 6l7-3" stroke="#999" />
        <path d="M8 5l3 7M6 9.500l8 1" stroke="#cfd6dd" strokeWidth="1.400" />
        <circle cx="13.500" cy="10.500" r="1.800" stroke="#2d80c2" strokeWidth="1.500" />
        <circle cx="11" cy="13.500" r="1.800" stroke="#2d80c2" strokeWidth="1.500" />
      </>
    ),
    size: "h-[17px] w-[17px]",
  },
  {
    name: "步骤记录器",
    icon: (
      <>
        <path d="M0 1.500h15v12H0z" fill="#e9eef0" stroke="#8b979d" />
        <path d="M1.500 4h7v7.500h-7z" fill="#4e9081" />
        <path d="M10 5h4M10 7h4" stroke="#87969b" />
        <circle cx="12.500" cy="12.500" r="3.300" fill="#d8242c" stroke="#fff" />
      </>
    ),
    size: "h-[17px] w-[17px]",
  },
  {
    name: "迅雷",
    icon: (
      <>
        <rect width="16" height="16" rx="1" fill="#f4f8fd" />
        <path d="M1 3l8 3.500L14.500 3 14 5.500 12.500 7c.5 3-.5 5-3 5.500l1 2C8 14 6 13 5 11L2.500 8.500l2 .2z" fill="#2485e4" />
      </>
    ),
    size: "h-[17px] w-[17px]",
  },
  {
    name: "文件资源管理器",
    icon: (
      <>
        <path d="M0 2h6l1.500 1.500H16V14H0z" fill="#f8da7c" />
        <path d="M0 5h16v2H0z" fill="#fdeeb0" />
        <path d="M3 14.500V9h10v5.500h-3V11.500H6v3z" fill="#3da9e4" />
      </>
    ),
    size: "h-[17px] w-[17px]",
  },
  {
    name: "计算器",
    icon: (
      <>
        <path d="M2 0h12v16H2z" fill="#fff" />
        <path d="M3.500 1.500h9v2.700h-9z" fill="#171717" />
        <path d="M4 7h8.500M4 10h8.500M4 13h8.500" stroke="#171717" strokeWidth="1.500" strokeDasharray="1.700 1.500" />
      </>
    ),
    size: "h-[18px] w-[18px]",
  },
  {
    name: "浏览器",
    run: true,
    icon: (
      <>
        <circle cx="8" cy="8" r="8" fill="#ee7b1c" />
        <path d="M2.500 12C1 7 5 3.500 9 3.500c2.500 0 4.500 1.500 5 3.500l-3.500-.5 1.500 2-3-.5.800 2L7 9.500C5 10 4 11 2.500 12z" fill="#fdeedd" />
      </>
    ),
    size: "h-[18px] w-[18px]",
  },
  {
    name: "画图",
    run: true,
    icon: (
      <>
        <path d="M1 10c0-5 5-7 9-6 4 1 5 5 3 8-1 2-3 0-5 2-3 2-7 0-7-4z" fill="#b9dbea" stroke="#6998b3" strokeWidth=".7" />
        <circle cx="4.500" cy="10" r="1.500" fill="#e24a3c" />
        <circle cx="7" cy="6.800" r="1.400" fill="#4aa64a" />
        <circle cx="11" cy="7" r="1.300" fill="#f0c93d" />
        <path d="M14.500 1L8.500 14" stroke="#d58b38" strokeWidth="1.800" />
        <path d="M15.500 0l-1.500 4-1.500-1z" fill="#e8d7b2" />
      </>
    ),
    size: "h-[18px] w-[18px]",
  },
  {
    name: "百度",
    run: true,
    icon: (
      <>
        <circle cx="8" cy="8" r="8" fill="#eef4fc" />
        <ellipse cx="3.600" cy="7" rx="1.300" ry="1.800" fill="#2468c8" />
        <ellipse cx="6.300" cy="4.200" rx="1.300" ry="1.900" fill="#2468c8" />
        <ellipse cx="9.900" cy="4.200" rx="1.300" ry="1.900" fill="#2468c8" />
        <ellipse cx="12.500" cy="7" rx="1.300" ry="1.800" fill="#2468c8" />
        <path d="M8 7c2 0 2.500 2 4 3.500s.5 3.500-1.500 3.500h-5C3.500 14 2.500 12 4 10.500S6 7 8 7z" fill="#2468c8" />
        <path d="M6 10.500h1.500v2H6zM9 10.500v2h1.500v-2" stroke="#fff" strokeWidth=".6" />
      </>
    ),
    size: "h-[18px] w-[18px]",
  },
  {
    name: "星形应用",
    run: true,
    icon: (
      <>
        <path d="M6.700 6L5.500 1M6.200 6.500L1 5.500" stroke="#f0922e" strokeWidth="1.500" />
        <path d="M9.500 6.500L10.500 1M9.500 6.500l6-1M15.500 5.500L11 9.500M11 9.500l2.500 5.500M13.500 15L8 11.500M8 11.500L3 15M3 15l2-5.500M5 9.500L.5 8" stroke="#1ba6c9" strokeWidth="1.400" />
      </>
    ),
    size: "h-[17px] w-[17px]",
  },
  {
    name: "Word",
    run: true,
    active: true,
    icon: (
      <>
        <path d="M3 1h13v12H3z" fill="#e9f0fb" stroke="#9db4d8" strokeWidth=".6" />
        <path d="M12 4h3M12 6.500h3M12 9h3" stroke="#4d7fca" strokeWidth="1.200" />
        <path d="M0 1h12v13H0z" fill="#dce8fa" />
        <path d="M1.500 3l2 8.500L6.200 4.500 8.500 11.500 10.500 3" stroke="#1f55b5" strokeWidth="2.400" />
        <path d="M10 11h6v4h-6z" fill="#fff" />
      </>
    ),
    size: "h-[17px] w-[17px]",
  },
  {
    name: "美图秀秀",
    run: true,
    icon: (
      <>
        <circle cx="8" cy="8" r="7.500" fill="#d92f52" stroke="#f3b9c4" />
        <path d="M5 5.500l5.500-1M7.800 4.200V8M4.500 6.700h7M7.500 6.700L5 8.800M8.500 6.700l2.500 2M5.500 9.300h3.800l-.6 1.300h2c0 1.800-.8 1.800-1.800 1.500M7 9.300c0 1.800-.8 2.500-1.800 3" stroke="#fff" strokeWidth=".9" />
      </>
    ),
    size: "h-[19px] w-[19px]",
  },
  {
    name: "Adobe Reader",
    run: true,
    icon: (
      <>
        <rect x=".8" y=".8" width="14.400" height="14.400" fill="#2b0b0c" stroke="#d31a1b" strokeWidth="1.500" />
        <path d="M7.500 3c1.300 3-.8 6.500-4.500 9.500M7.800 6.500c1 2.500 3 3.800 5.500 4M4.800 10.500C7 9.200 10 9 12.800 9.800" stroke="#f2dede" strokeWidth="1.100" />
      </>
    ),
    size: "h-[16px] w-[16px]",
  },
];

const TRAY = [
  <><rect x="0" y="0" width="16" height="16" rx="3" fill="#189cf2" /><path d="M8 2v12M3 5l10 6M13 5L3 11" stroke="#fff" strokeWidth="2.400" /></>,
  <><rect y="3" width="16" height="11" fill="#0a0a0a" stroke="#666" strokeWidth=".6" /><path d="M5 6H2v2.500h3V11H2M10 6H7v2.500h3V11H7M12 6v5c3 0 3-5 0-5" stroke="#ddd" /></>,
  <><path d="M1 2h14v10H1z" fill="#9a9da1" /><path d="M3 14h5M11 11l3 4" stroke="#8e9195" strokeWidth="2" /></>,
  <><rect y="1" width="16" height="14" fill="#2963b8" /><path d="M2 12c0-4 3-3 3-5 3-3 5 0 5 1 4-1 4 2 4 4z" fill="#fff" /></>,
  <><path d="M1 6h4l6-5v14l-6-5H1z" fill="#ee6a3c" /><path d="M14 4v8" stroke="#8c2d20" strokeWidth="2" /></>,
  <><path d="M4 6h11v7H4zM15.500 8v3" stroke="#eee" strokeWidth="1.300" /><path d="M7 8h6v3H7zM0 3h4v4H0z" fill="#eee" /></>,
  <><path d="M1 6h3l4-4v12l-4-4H1zM10 6l5 5M15 6l-5 5" stroke="#eee" strokeWidth="1.200" /></>,
  <><path d="M2 14A12 12 0 0 1 14 2M5 14a9 9 0 0 1 9-9M8 14a6 6 0 0 1 6-6" stroke="#a9adb2" strokeWidth="1.300" /><circle cx="12.500" cy="12.500" r="1.500" fill="#ddd" /></>,
];

function TaskBar() {
  return (
    <footer className="flex h-[29px] shrink-0 items-stretch bg-[#15171b] text-white">
      <div className="-ml-px grid w-[610px] shrink-0 grid-cols-17">
        {APPS.map((a) => (
          <button
            type="button"
            key={a.name}
            aria-label={a.name}
            className={"flex flex-col items-center " + (a.active ? "bg-[#474a50]" : "")}
          >
            <span className="flex flex-1 items-center">
              <Svg className={a.size}>{a.icon}</Svg>
            </span>
            <span className={"h-[2px] " + (a.active ? "w-full " : "w-[30px] ") + (a.run ? "bg-[#f5cf9d]" : "")} />
          </button>
        ))}
      </div>
      <div className="ml-auto flex items-center">
        {TRAY.map((t, i) => (
          <span key={i} className="flex w-[18px] justify-center">
            <Svg className="h-[11px] w-[11px]">{t}</Svg>
          </span>
        ))}
        <span className="w-[14px] text-center text-[9px]">中</span>
        <time className="w-[52px] text-center text-[9px] leading-[14px]">
          23:03
          <br />
          2017/12/17
        </time>
        <button type="button" aria-label="通知" className="ml-[9px] mr-[13px]">
          <Svg box="0 0 18 18" className="h-[18px] w-[18px]">
            <path d="M1 1.500h12v10H6l-3 3v-3H1z" fill="#fff" />
            <path d="M3 4h8M3 6.500h8M3 9h8" stroke="#15171b" />
            <circle cx="12.500" cy="12.500" r="5" fill="#3b3d42" stroke="#c4c4c4" />
            <text x="10.500" y="15.500" fontSize="8" fill="#fff">1</text>
          </Svg>
        </button>
      </div>
    </footer>
  );
}

function Watermark() {
  return (
    <div className="pointer-events-none absolute bottom-[22px] right-[55px] z-20 w-[177px] text-white/75">
      <div className="flex items-end">
        <span className="font-['Liberation_Sans',sans-serif] text-[39px] font-bold leading-[40px]">Bai</span>
        <Svg box="0 0 52 58" className="mb-[4px] h-[57px] w-[52px]">
          <g fill="#fff" fillOpacity=".75">
            <ellipse cx="7" cy="23" rx="6.500" ry="8.500" />
            <ellipse cx="20" cy="11" rx="6.500" ry="9" />
            <ellipse cx="35" cy="11" rx="6.500" ry="9" transform="rotate(8 35 11)" />
            <ellipse cx="45" cy="26" rx="6.500" ry="8.500" />
            <path d="M26 25c8 0 10 7 15 12 8 8 7 20-4 20H15C2 57 3 44 11 37c6-5 7-12 15-12z" />
          </g>
          <text x="11" y="52" fontSize="25" fontWeight="700" fontFamily="Liberation Sans" fill="#7d9abd">du</text>
        </Svg>
        <span className="mb-[4px] ml-px font-['Noto_Sans_CJK_SC',sans-serif] text-[30px] font-bold leading-[34px]">经验</span>
      </div>
      <div className="-mt-[5px] font-['Noto_Sans',sans-serif] text-[21px] leading-[30px]">jingyan.baidu.com</div>
    </div>
  );
}

export default function App() {
  return (
    <div className={"relative flex h-screen w-full flex-col overflow-hidden bg-white " + UI}>
      <TitleBar />
      <TabBar />
      <Ribbon />
      <div className="flex min-h-0 flex-1 bg-gradient-to-b from-[#c9dcf3] via-[#a4b9d7] to-[#829fbf]">
        <VerticalRuler />
        <div className="flex min-w-0 flex-1 flex-col">
          <HorizontalRuler />
          <DocumentPage />
        </div>
        <ScrollBar />
      </div>
      <StatusBar />
      <TaskBar />
      <Watermark />
    </div>
  );
}
